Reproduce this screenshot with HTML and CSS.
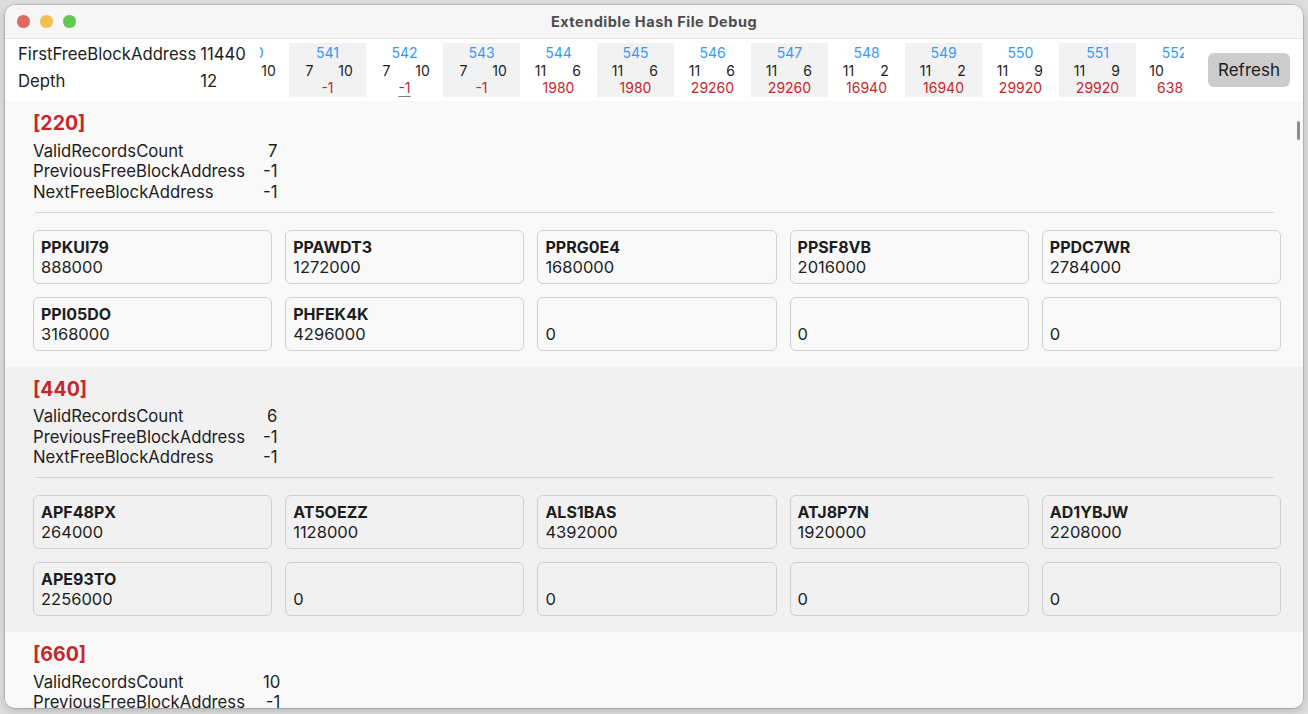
FILE: index.html
```html
<!DOCTYPE html>
<html>
<head>
<meta charset="utf-8">
<title>Extendible Hash File Debug</title>
<link rel="stylesheet" href="styles.css">
</head>
<body>
<div class="window">
  <div class="titlebar">
    <div class="lights">
      <span class="light red"></span>
      <span class="light yellow"></span>
      <span class="light green"></span>
    </div>
    <div class="title">Extendible Hash File Debug</div>
  </div>

  <div class="topbar">
    <div class="info">
      <div class="info-label">FirstFreeBlockAddress</div><div class="info-value">11440</div>
      <div class="info-label">Depth</div><div class="info-value">12</div>
    </div>
    <div class="strip">
      <div class="strip-inner">
        <div class="col"><div class="idx">540</div><div class="pair"><span>7</span><span>10</span></div><div class="addr">-1</div></div>
        <div class="col alt"><div class="idx">541</div><div class="pair"><span>7</span><span>10</span></div><div class="addr">-1</div></div>
        <div class="col"><div class="idx">542</div><div class="pair"><span>7</span><span>10</span></div><div class="addr"><span class="focus">-1</span></div></div>
        <div class="col alt"><div class="idx">543</div><div class="pair"><span>7</span><span>10</span></div><div class="addr">-1</div></div>
        <div class="col"><div class="idx">544</div><div class="pair"><span>11</span><span>6</span></div><div class="addr">1980</div></div>
        <div class="col alt"><div class="idx">545</div><div class="pair"><span>11</span><span>6</span></div><div class="addr">1980</div></div>
        <div class="col"><div class="idx">546</div><div class="pair"><span>11</span><span>6</span></div><div class="addr">29260</div></div>
        <div class="col alt"><div class="idx">547</div><div class="pair"><span>11</span><span>6</span></div><div class="addr">29260</div></div>
        <div class="col"><div class="idx">548</div><div class="pair"><span>11</span><span>2</span></div><div class="addr">16940</div></div>
        <div class="col alt"><div class="idx">549</div><div class="pair"><span>11</span><span>2</span></div><div class="addr">16940</div></div>
        <div class="col"><div class="idx">550</div><div class="pair"><span>11</span><span>9</span></div><div class="addr">29920</div></div>
        <div class="col alt"><div class="idx">551</div><div class="pair"><span>11</span><span>9</span></div><div class="addr">29920</div></div>
        <div class="col"><div class="idx">552</div><div class="pair"><span>10</span><span>8</span></div><div class="addr">6380</div></div>
        <div class="col alt"><div class="idx">553</div><div class="pair"><span>10</span><span>8</span></div><div class="addr">6380</div></div>
      </div>
    </div>
    <button class="refresh">Refresh</button>
  </div>

  <div class="content">
    <div class="block">
      <div class="block-title">[220]</div>
      <div class="stats">
        <div>ValidRecordsCount</div><div class="v">7</div>
        <div>PreviousFreeBlockAddress</div><div class="v">-1</div>
        <div>NextFreeBlockAddress</div><div class="v">-1</div>
      </div>
      <div class="divider"></div>
      <div class="cards">
        <div class="card"><div class="key">PPKUI79</div><div class="val">888000</div></div>
        <div class="card"><div class="key">PPAWDT3</div><div class="val">1272000</div></div>
        <div class="card"><div class="key">PPRG0E4</div><div class="val">1680000</div></div>
        <div class="card"><div class="key">PPSF8VB</div><div class="val">2016000</div></div>
        <div class="card"><div class="key">PPDC7WR</div><div class="val">2784000</div></div>
        <div class="card"><div class="key">PPI05DO</div><div class="val">3168000</div></div>
        <div class="card"><div class="key">PHFEK4K</div><div class="val">4296000</div></div>
        <div class="card"><div class="key"></div><div class="val">0</div></div>
        <div class="card"><div class="key"></div><div class="val">0</div></div>
        <div class="card"><div class="key"></div><div class="val">0</div></div>
      </div>
    </div>

    <div class="block alt">
      <div class="block-title">[440]</div>
      <div class="stats">
        <div>ValidRecordsCount</div><div class="v">6</div>
        <div>PreviousFreeBlockAddress</div><div class="v">-1</div>
        <div>NextFreeBlockAddress</div><div class="v">-1</div>
      </div>
      <div class="divider"></div>
      <div class="cards">
        <div class="card"><div class="key">APF48PX</div><div class="val">264000</div></div>
        <div class="card"><div class="key">AT5OEZZ</div><div class="val">1128000</div></div>
        <div class="card"><div class="key">ALS1BAS</div><div class="val">4392000</div></div>
        <div class="card"><div class="key">ATJ8P7N</div><div class="val">1920000</div></div>
        <div class="card"><div class="key">AD1YBJW</div><div class="val">2208000</div></div>
        <div class="card"><div class="key">APE93TO</div><div class="val">2256000</div></div>
        <div class="card"><div class="key"></div><div class="val">0</div></div>
        <div class="card"><div class="key"></div><div class="val">0</div></div>
        <div class="card"><div class="key"></div><div class="val">0</div></div>
        <div class="card"><div class="key"></div><div class="val">0</div></div>
      </div>
    </div>

    <div class="block">
      <div class="block-title">[660]</div>
      <div class="stats">
        <div>ValidRecordsCount</div><div class="v">10</div>
        <div>PreviousFreeBlockAddress</div><div class="v">-1</div>
        <div>NextFreeBlockAddress</div><div class="v">-1</div>
      </div>
      <div class="divider"></div>
    </div>

    <div class="scroll-thumb"></div>
  </div>
</div>
</body>
</html>
```

FILE: styles.css
```css
* { box-sizing: border-box; }

html, body {
  margin: 0;
  height: 100%;
}

body {
  background: #dedede;
  padding: 5px 5px 6px 5px;
  font-family: Inter, "Liberation Sans", sans-serif;
  color: #1d1d1d;
  overflow: hidden;
}

.window {
  height: 703px;
  border-radius: 10px;
  overflow: hidden;
  background: #f9f9f9;
  display: flex;
  flex-direction: column;
  box-shadow: 0 0 0 0.5px rgba(0,0,0,0.25), 0 3px 10px rgba(0,0,0,0.18);
  position: relative;
}

/* title bar */
.titlebar {
  height: 34px;
  flex: none;
  background: #f6f6f6;
  border-bottom: 1px solid #e3e3e3;
  display: flex;
  align-items: center;
  position: relative;
}

.lights {
  display: flex;
  gap: 10.5px;
  padding-left: 12px;
}

.light {
  width: 12.5px;
  height: 12.5px;
  border-radius: 50%;
  display: block;
}
.light.red { background: #dc6a64; }
.light.yellow { background: #f1c14f; }
.light.green { background: #63c655; }

.title {
  position: absolute;
  left: 0;
  right: 0;
  text-align: center;
  font-size: 14.5px;
  letter-spacing: 0.5px;
  font-weight: 700;
  color: #4d4d4d;
  pointer-events: none;
}

/* top bar */
.topbar {
  height: 62px;
  flex: none;
  background: #ffffff;
  display: flex;
  align-items: center;
  padding: 0 13px;
}

.info {
  width: 242px;
  flex: none;
  align-self: flex-start;
  padding-top: 5px;
  display: grid;
  grid-template-columns: auto 1fr;
  column-gap: 4px;
  row-gap: 7px;
  font-size: 16.7px;
  line-height: 20px;
}

.strip {
  flex: 1;
  height: 54px;
  overflow: hidden;
}

.strip-inner {
  display: flex;
  margin-left: -48px;
  height: 100%;
}

.col {
  width: 77px;
  flex: none;
  padding-top: 1px;
  font-size: 14px;
  line-height: 17.5px;
  text-align: center;
  background: #ffffff;
}
.col.alt { background: #f2f2f2; }

.idx { color: #3a98f5; }
.pair {
  display: flex;
  justify-content: center;
  color: #1d1d1d;
}
.pair span { width: 36px; text-align: center; }
.addr { color: #c4282e; }

.focus {
  text-decoration: underline;
  text-decoration-color: #7a7a7a;
  text-decoration-thickness: 2px;
  text-underline-offset: 3px;
}

.refresh {
  flex: none;
  margin-left: 24px;
  width: 82px;
  height: 34px;
  border: none;
  border-radius: 6px;
  background: #cccccc;
  font-family: Inter, "Liberation Sans", sans-serif;
  font-size: 17px;
  color: #1d1d1d;
  padding: 0;
}

/* content */
.content {
  flex: 1;
  overflow: hidden;
  position: relative;
}

.block {
  background: #f9f9f9;
  padding: 10px 22px 16px 28px;
}
.block.alt { background: #f1f1f1; }

.block-title {
  font-size: 19.5px;
  line-height: 24px;
  font-weight: 700;
  color: #c4282e;
}

.stats {
  margin-top: 5.5px;
  display: grid;
  grid-template-columns: auto auto;
  justify-content: start;
  column-gap: 18px;
  font-size: 16.7px;
  line-height: 20.5px;
}
.stats .v { justify-self: end; }

.divider {
  margin: 9.5px 7px 0 2px;
  height: 1px;
  background: #d4d4d4;
}

.cards {
  margin-top: 17px;
  display: grid;
  grid-template-columns: repeat(5, 1fr);
  gap: 13px;
}

.card {
  height: 54px;
  border: 1px solid #cfcfcf;
  border-radius: 6px;
  padding: 7px 7px 6px;
}

.key {
  font-size: 16px;
  font-weight: 700;
  line-height: 19px;
  height: 19px;
}

.val {
  font-size: 16.5px;
  line-height: 20px;
}

.scroll-thumb {
  position: absolute;
  right: 3px;
  top: 20px;
  width: 3px;
  height: 19px;
  border-radius: 2px;
  background: #8c8c8c;
}
```
